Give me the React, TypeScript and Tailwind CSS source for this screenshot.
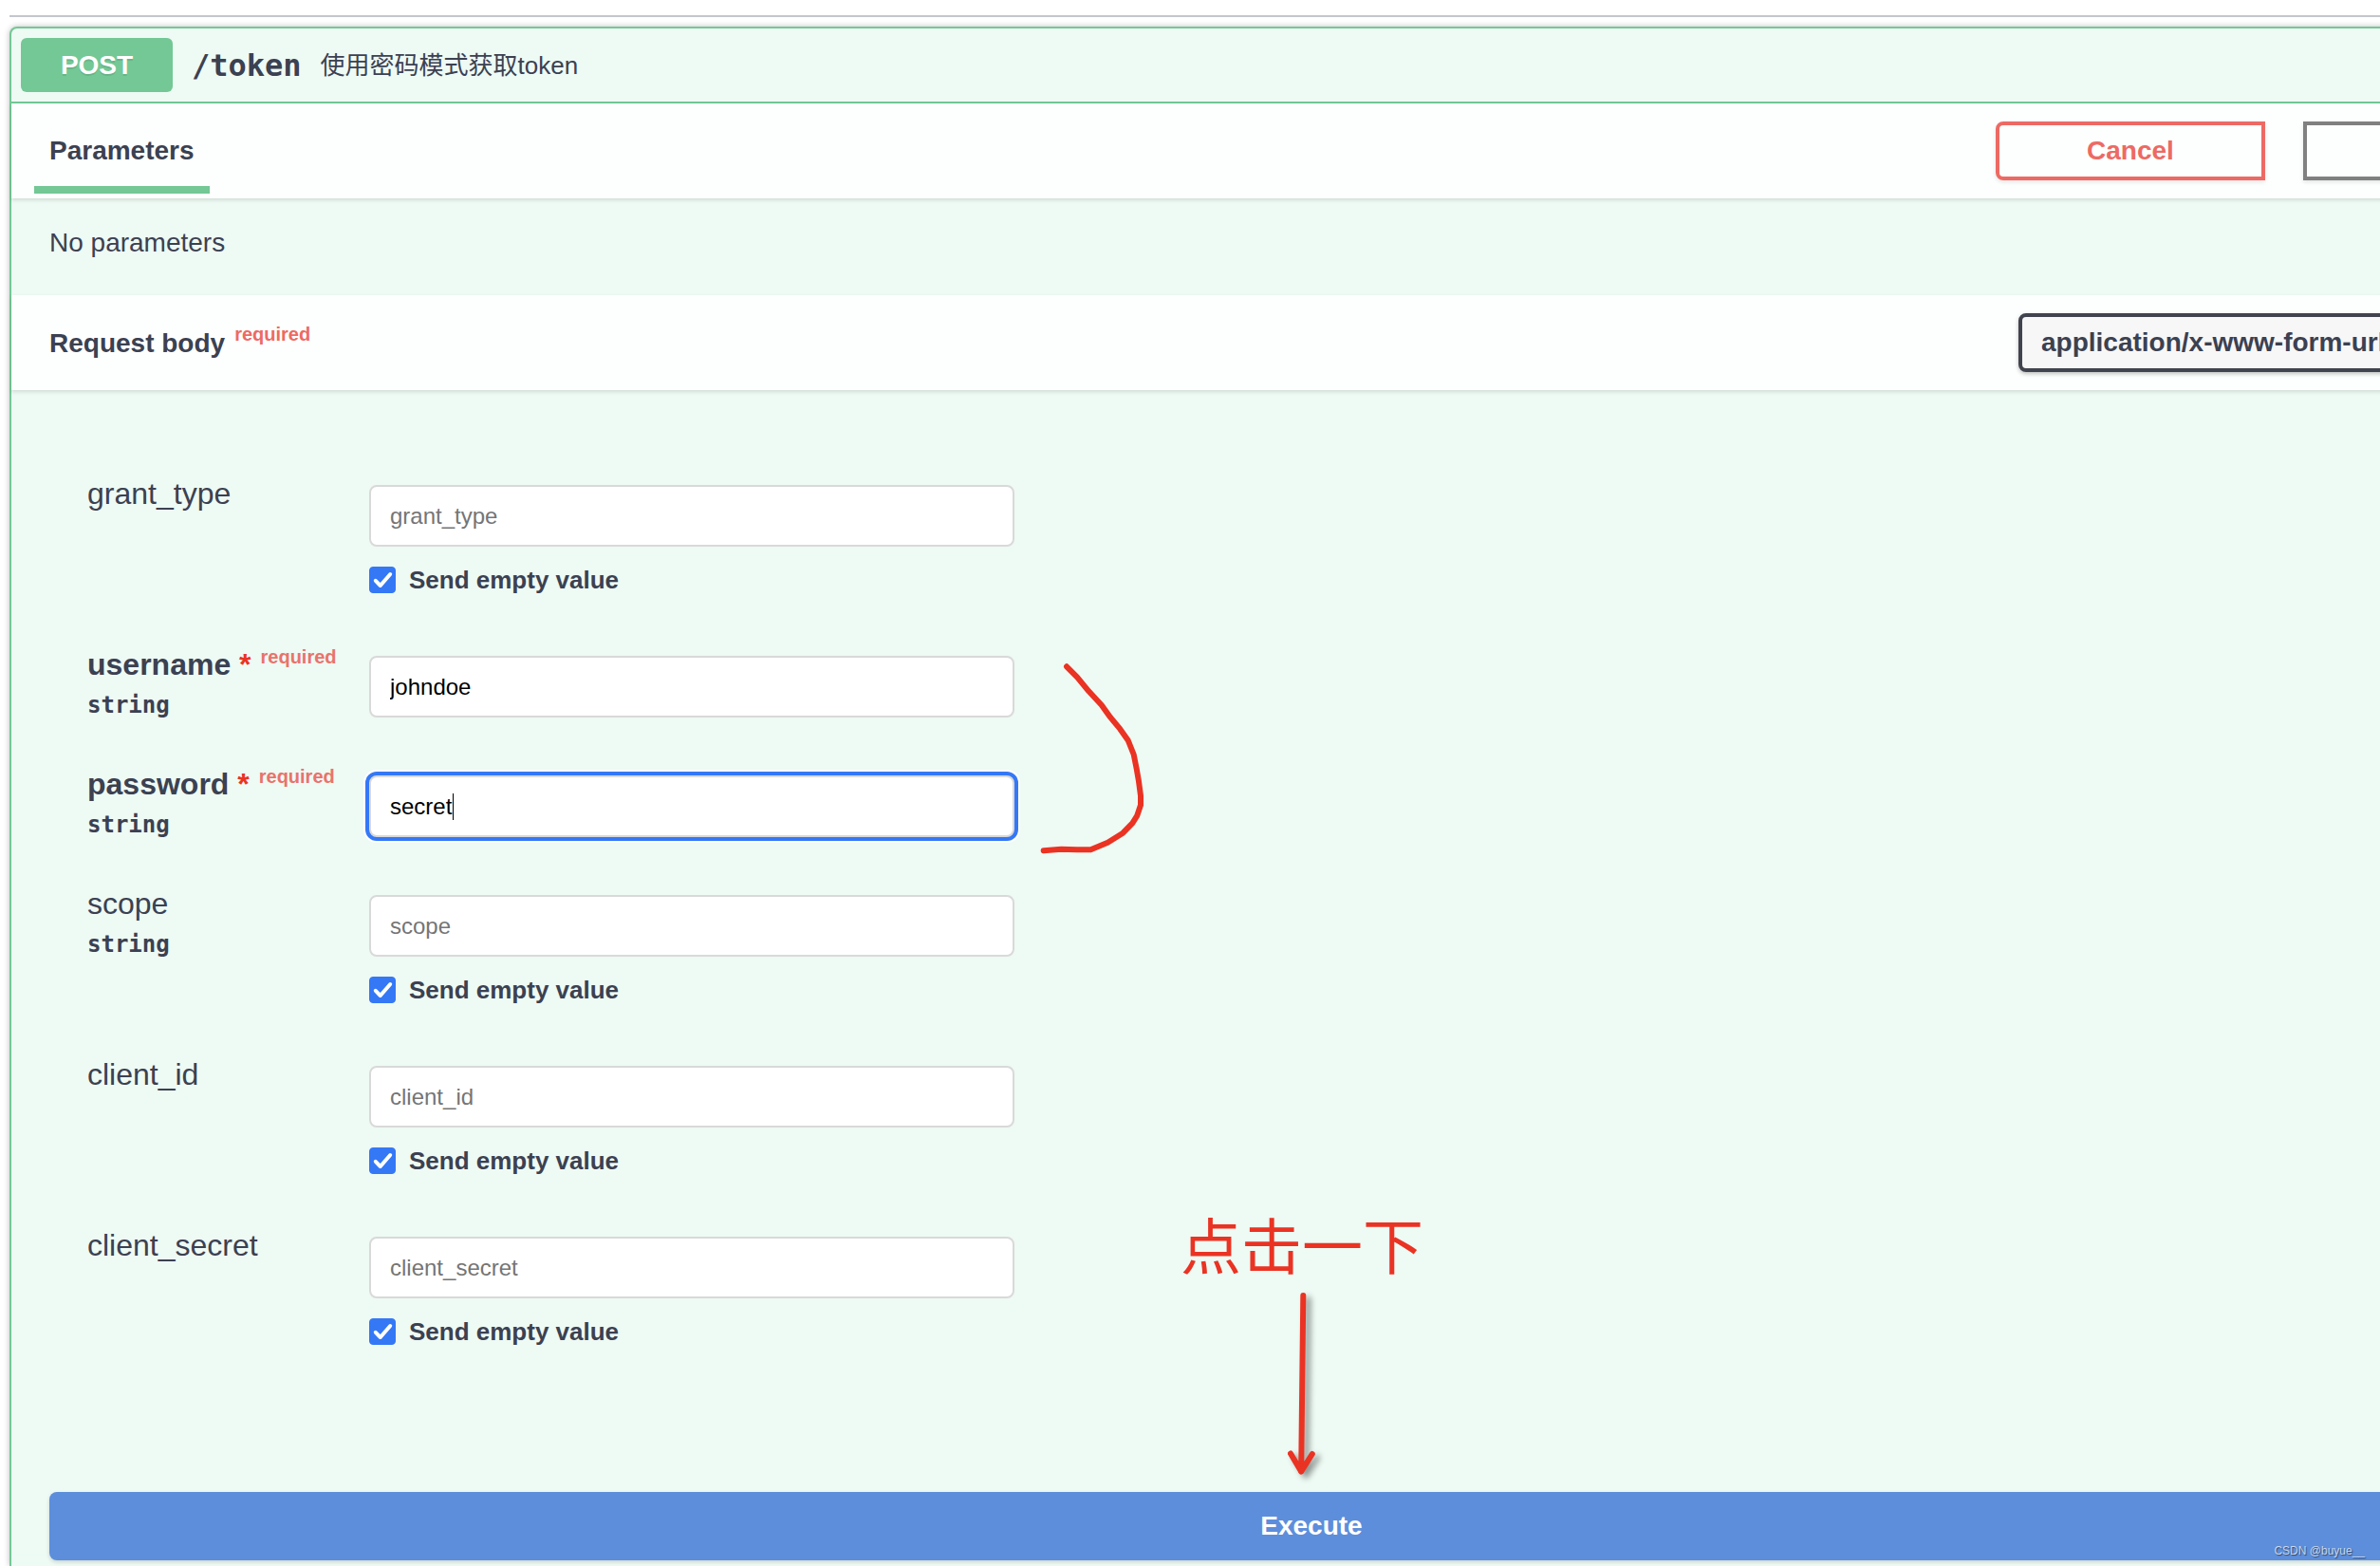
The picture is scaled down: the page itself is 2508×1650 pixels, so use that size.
import { useState } from "react";

type Field = {
  name: string;
  value?: string;
  type?: string;
  required?: boolean;
  focused?: boolean;
};

const fields: Field[] = [
  { name: "grant_type" },
  { name: "username", value: "johndoe", type: "string", required: true },
  { name: "password", value: "secret", type: "string", required: true, focused: true },
  { name: "scope", type: "string" },
  { name: "client_id" },
  { name: "client_secret" },
];

const EmptyValueCheckbox = ({ id }: { id: string }) => {
  const [checked, setChecked] = useState(true);
  return (
    <label htmlFor={id} className="mt-[21px] flex w-fit items-center gap-3.5">
      <span className="relative size-7">
        <input
          id={id}
          type="checkbox"
          checked={checked}
          onChange={() => setChecked(!checked)}
          className="peer block size-7 appearance-none rounded-[4px] border border-gray-300 bg-white checked:border-[#3478f6] checked:bg-[#3478f6]"
        />
        <svg
          viewBox="0 0 28 28"
          className="pointer-events-none absolute inset-0 hidden size-7 peer-checked:block"
          fill="none"
          stroke="white"
          strokeWidth="4"
          strokeLinecap="round"
          strokeLinejoin="round"
        >
          <path d="M6.8 14.8 L11.8 20 L22.2 8" />
        </svg>
      </span>
      <span className="text-[26px] leading-7 font-bold">Send empty value</span>
    </label>
  );
};

const FieldRow = ({ field }: { field: Field }) => {
  const [value, setValue] = useState(field.value ?? "");
  return (
    <div className={`flex items-start ${field.required ? "mb-[53px]" : "mb-[59px]"}`}>
      <div className="w-[297px] shrink-0">
        <label
          htmlFor={field.name}
          className={`flex text-[32px] leading-8 ${field.required ? "font-bold" : ""}`}
        >
          {field.name}
          {field.required && (
            <>
              <span className="text-[#ea3323]">&nbsp;*</span>
              <span className="pl-2.5 text-xl leading-4 text-[#e9736b]">required</span>
            </>
          )}
        </label>
        {field.type && (
          <div className="mt-[13px] font-['DejaVu_Sans_Mono',monospace] text-2xl leading-7 font-bold">
            {field.type}
          </div>
        )}
      </div>
      <div className="pt-[7px]">
        <div className="relative">
          <input
            id={field.name}
            type="text"
            value={value}
            placeholder={field.name}
            onChange={(e) => setValue(e.target.value)}
            className={`block h-[65px] w-[680px] rounded-lg border-2 border-[#d9d9d9] bg-white px-5 text-2xl text-black outline-none placeholder:text-[#757575] ${
              field.focused ? "shadow-[0_0_0_4px_#3478f6,0_0_0_6px_white]" : ""
            }`}
          />
          {field.focused && (
            <span className="absolute top-[19px] left-[88px] h-7 w-px bg-black" />
          )}
        </div>
        {!field.required && <EmptyValueCheckbox id={`${field.name}-empty`} />}
      </div>
    </div>
  );
};

// red pen marks lying over the form
const Annotations = () => (
  <div className="pointer-events-none absolute inset-0 text-[#ea3323]">
    <svg
      className="absolute top-[690px] left-[1090px]"
      width="120"
      height="220"
      viewBox="1090 690 120 220"
      fill="none"
      stroke="currentColor"
      strokeWidth="6"
      strokeLinecap="round"
      strokeLinejoin="round"
    >
      <path d="M1124 702.3 L1135 713.3 L1147.3 728.3 L1160.7 742.7 L1170 755.7 L1180 767.7 L1188.7 780 L1194.7 795 L1197.7 810 L1200 823.3 L1202 838.3 L1202 848.3 L1198.3 859.3 L1193.3 867.3 L1183.3 877.7 L1167.3 887.7 L1149.3 895.3 L1135 895.3 L1118.3 894.7 L1099.7 896.3" />
    </svg>
    <div className="absolute top-[1277px] left-[1244px] font-['Noto_Sans_CJK_SC',sans-serif] text-[64px] leading-[64px]">
      点击一下
    </div>
    <svg
      className="absolute top-[1350px] left-[1340px] drop-shadow-[5px_4px_3px_rgba(0,0,0,0.4)]"
      width="70"
      height="220"
      viewBox="1340 1350 70 220"
      fill="none"
      stroke="currentColor"
      strokeWidth="6"
      strokeLinecap="round"
      strokeLinejoin="round"
    >
      <path d="M1373.3 1365 L1371.2 1550" />
      <path d="M1360 1531.5 L1371.2 1550.5 L1382.8 1532" />
      <path d="M1366.5 1541 L1371.2 1550 L1376 1541 Z" fill="currentColor" strokeWidth="3" />
    </svg>
  </div>
);

const App = () => {
  return (
    <main className="relative overflow-hidden bg-white font-['Liberation_Sans','Noto_Sans_CJK_SC',sans-serif] text-[#3b4151]">
      {/* the block is wider than the window and runs off its right edge */}
      <div className="-mr-[246px] ml-2.5 pt-4">
        <hr className="mb-2.5 border-t-2 border-[#c4c6cd]" />
        <section className="rounded-t-lg border-2 border-b-0 border-[#73c895] bg-[#eefaf4] shadow-[0_0_6px_rgba(0,0,0,0.25)]">
          <div className="flex items-center border-b-2 border-[#73c895] p-2.5">
            <span className="w-40 rounded-md bg-[#73c895] text-center text-[28px] leading-[57px] font-bold text-white [text-shadow:0_2px_0_rgba(0,0,0,0.1)]">
              POST
            </span>
            <span className="pl-5 font-['DejaVu_Sans_Mono',monospace] text-[32px] leading-10 font-bold">
              /token
            </span>
            <span className="pl-5 text-[26px] leading-10">使用密码模式获取token</span>
          </div>

          <div className="relative flex h-[100px] items-center justify-between bg-[#fdfffe] px-10 shadow-[0_2px_4px_rgba(0,0,0,0.12)]">
            <div className="-ml-4 flex h-full flex-col justify-end pb-[5px]">
              <h4 className="border-b-8 border-[#73c895] px-4 pb-5 text-[28px] leading-[34px] font-bold">
                Parameters
              </h4>
            </div>
            <div className="flex gap-10">
              <button
                type="button"
                className="h-[62px] w-[284px] rounded-l-lg border-4 border-[#ed6a64] text-[28px] font-bold text-[#ed6a64] shadow-[0_2px_4px_rgba(0,0,0,0.1)]"
              >
                Cancel
              </button>
              <button
                type="button"
                aria-label="Reset"
                className="h-[62px] w-[285px] border-4 border-[#808080] shadow-[0_2px_4px_rgba(0,0,0,0.1)]"
              />
            </div>
          </div>

          <p className="px-10 pt-[31px] pb-[39px] text-[28px] leading-8">No parameters</p>

          <div className="relative flex h-[100px] items-center justify-between bg-[#fdfffe] px-10 shadow-[0_2px_4px_rgba(0,0,0,0.12)]">
            <h4 className="flex pt-0.5 text-[28px] leading-8 font-bold">
              Request body
              <span className="pl-2.5 text-xl leading-3 text-[#ed6a64]">required</span>
            </h4>
            <select
              aria-label="Request content type"
              className="h-[62px] w-[585px] appearance-none rounded-lg border-4 border-[#41444e] bg-[#f7f7f7] px-5 text-[28px] font-bold shadow-[0_2px_4px_rgba(0,0,0,0.25)]"
            >
              <option>application/x-www-form-urlencoded</option>
            </select>
          </div>

          <div className="px-20 pt-[93px] pb-[37px]">
            {fields.map((field) => (
              <FieldRow key={field.name} field={field} />
            ))}
          </div>

          <div className="px-10 pt-[59px] pb-1.5">
            <button
              type="button"
              className="block h-[72px] w-full rounded-lg bg-[#5d8edb] text-[28px] font-bold text-white shadow-[0_2px_4px_rgba(0,0,0,0.15)]"
            >
              Execute
            </button>
          </div>
        </section>
      </div>

      <Annotations />
      <span className="absolute right-4 bottom-2 text-xs text-white/70 [text-shadow:1px_1px_1px_rgba(0,0,0,0.5)]">
        CSDN @buyue__
      </span>
    </main>
  );
};

export default App;
